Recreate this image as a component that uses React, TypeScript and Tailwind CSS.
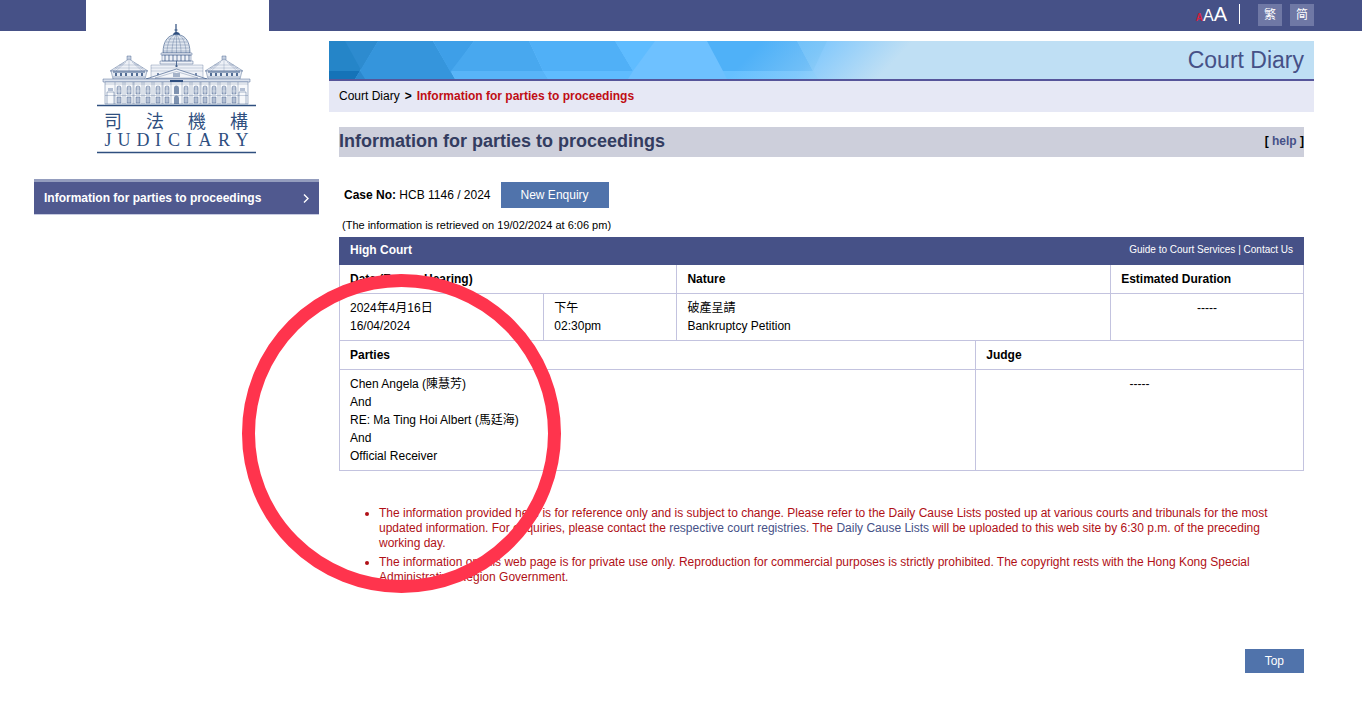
import React from 'react';

const NAVY = '#2f4f7f';

const WINDOWS = [22, 32, 41, 51, 61, 70, 89, 99, 108, 117, 127, 137];
const CHINESE_NAME = '司法機構';
const ENGLISH_NAME = 'JUDICIARY';

const SideWing = ({ x }: { x: number }) => (
  <g transform={`translate(${x} 0)`} stroke={NAVY} strokeWidth={0.4}>
    <path d="M17 38v-4h4v4" fill="#c9d3e3" />
    <path d="M19 37 0 49h38Z" fill="#eef1f7" />
    <path
      d="M16 40 6 49M19 38v11M22 40l10 9M14 41 3 49M24 41l11 8M9 43h20M5 46h28"
      strokeWidth={0.2}
    />
    <path d="M1 49h36l-2 8H3Z" fill="#e6ebf3" />
    <path d="M3 50h32" strokeWidth={0.9} />
    <path d="M6 51v3M11 51v3M16 51v3M22 51v3M27 51v3M32 51v3" strokeWidth={1.6} />
    <path d="M3 55h32" />
  </g>
);

const Logo = () => (
  <svg viewBox="0 0 160 132" className="h-[132px] w-[160px]" fill="none">
    <path d="M79 2v9M77.5 8h3" stroke={NAVY} strokeWidth={1.2} />
    <path d="M76 13c0-4 7-4 7 0Z" fill={NAVY} />
    <path
      d="M66 31C66 18 72 12.5 79.5 12.5S93 18 93 31Z"
      fill="#dfe6ef"
      stroke={NAVY}
      strokeWidth={0.6}
    />
    <path
      d="M70 31c0-9 3-16 7-18M75 31c0-9 2-15 4-18M79.5 13v18M84 31c0-9-2-15-4-18M89 31c0-9-3-16-7-18M71 17h17M69 20h21M67.5 23h24M67 26h25M66 29h27"
      stroke={NAVY}
      strokeWidth={0.3}
    />
    <path
      d="M64 31h31v2H64ZM65 33h29v6H65ZM63 39h33v3H63Z"
      fill="#eef1f7"
      stroke={NAVY}
      strokeWidth={0.4}
    />
    <path
      d="M68 33v6M72 33v6M76 33v6M80 33v6M84 33v6M88 33v6M92 33v6"
      stroke={NAVY}
      strokeWidth={0.7}
    />
    <path d="M54 43h52v14H54Z" fill="#eef1f7" stroke={NAVY} strokeWidth={0.3} />
    <path d="M54 46h52M54 49h52" stroke={NAVY} strokeWidth={0.2} />
    <path d="M60 51h2v3h-2ZM98 51h2v3h-2Z" fill={NAVY} fillOpacity={0.6} />
    <SideWing x={13} />
    <SideWing x={108} />
    <path d="M79.5 39v6M78 44h3" stroke={NAVY} strokeWidth={0.8} />
    <path d="M49 57 79.5 47 110 57Z" fill="#f4f6fa" stroke={NAVY} strokeWidth={0.6} />
    <path d="M58 56 79.5 49.5 101 56Z" stroke={NAVY} strokeWidth={0.3} />
    <path d="M76 51h7v4h-7Z" fill={NAVY} fillOpacity={0.4} />
    <path d="M6 57h147v3H6Z" fill="#dbe2ed" stroke={NAVY} strokeWidth={0.4} />
    <path d="M73 58h13v3H73Z" fill={NAVY} />
    <path d="M8 60h143v22H8Z" fill="#f6f8fb" stroke={NAVY} strokeWidth={0.4} />
    <path d="M8 73.5h143M8 62h143" stroke={NAVY} strokeWidth={0.25} />
    {WINDOWS.map((x) => (
      <g key={x}>
        <path
          d={`M${x - 2} 72v-6a2 2 0 0 1 4 0v6Z`}
          fill="#b3bfd3"
          stroke={NAVY}
          strokeWidth={0.4}
        />
        <path d={`M${x} 64v8M${x - 2} 69h4`} stroke="#f6f8fb" strokeWidth={0.4} />
        <path d={`M${x - 2} 75h4v6h-4Z`} fill="#b3bfd3" stroke={NAVY} strokeWidth={0.4} />
        <path d={`M${x - 4} 60v22M${x + 4} 60v22`} stroke={NAVY} strokeWidth={0.3} />
      </g>
    ))}
    <path d="M10 82V70h7v12M142 82V70h7v12" stroke={NAVY} strokeWidth={0.4} />
    <path d="M11 66h5v3h-5ZM143 66h5v3h-5Z" fill="#b3bfd3" />
    <path
      d="M77 72v-6a2 2 0 0 1 5 0v6ZM77 82v-6a2 2 0 0 1 5 0v6Z"
      fill={NAVY}
      fillOpacity={0.6}
    />
    <path d="M0 83.5h159M0 130.5h159" stroke={NAVY} strokeWidth={1.5} />
    <text
      x="16 58 100 142"
      y="106"
      textAnchor="middle"
      fill={NAVY}
      className="font-['Noto_Sans_CJK_TC',sans-serif] text-[18px]"
    >
      {CHINESE_NAME}
    </text>
    <text
      x="11 27 46 61 77 92 108 127 145"
      y="124"
      textAnchor="middle"
      fill={NAVY}
      className="font-['Liberation_Serif',serif] text-[18px]"
    >
      {ENGLISH_NAME}
    </text>
  </svg>
);

const BannerArt = () => (
  <svg
    viewBox="0 0 600 38"
    className="h-[38px] w-[600px] shrink-0"
    fill="none"
    aria-hidden="true"
  >
    <defs>
      <linearGradient id="fade" x1="0" x2="1" y1="0" y2="0.06">
        <stop offset="0.72" stopColor="#bfdff4" stopOpacity="0" />
        <stop offset="0.83" stopColor="#bfdff4" stopOpacity="0.3" />
        <stop offset="0.97" stopColor="#bfdff4" />
      </linearGradient>
    </defs>
    <path d="M0 0h600v38H0Z" fill="#6ec1ff" />
    <path d="M0 0h49L26 38H0Z" fill="#2585c8" />
    <path d="M16 0h33L32 29Z" fill="#2d8bcf" />
    <path d="M0 30h31l-5 8H0Z" fill="#1573b8" />
    <path d="M49 0h55l22 38H26Z" fill="#3595dc" />
    <path d="M31 30l5 8H26Z" fill="#2b87cd" />
    <path d="M104 0h41l-23 32Z" fill="#3e9fe8" />
    <path d="M145 0h55l14 30h-92Z" fill="#48a8ef" />
    <path d="M122 30h92l5 8h-93Z" fill="#58b4f8" />
    <path d="M200 0h86l18 30h-90Z" fill="#50b0f7" />
    <path d="M214 30h90l-5 8h-80Z" fill="#5fbcff" />
    <path d="M286 0h40l-22 30Z" fill="#5fbcff" />
    <path d="M378 0h90l16 30h-90Z" fill="#4fb1f8" />
    <path d="M394 30h90l5 8h-91Z" fill="#66c0ff" />
    <path d="M468 0h30l-14 30Z" fill="#63bcfa" />
    <path d="M0 0h600v38H0Z" fill="url(#fade)" />
  </svg>
);

const Header = () => (
  <header className="flex h-[31px] items-start justify-end bg-[#465187] pt-1 pr-12 text-white">
    <button type="button" aria-label="Text size" className="flex h-5 items-baseline leading-5">
      <span className="text-[10px] font-bold text-[#d8213f]">A</span>
      <span className="text-[16px]">A</span>
      <span className="text-[20px]">A</span>
    </button>
    <span className="mr-[18px] ml-3 h-5 w-px bg-white" />
    <div className="flex gap-2">
      <a href="#tc" className="h-[22px] w-6 bg-[#6f78a5] text-center text-xs leading-[22px]">
        繁
      </a>
      <a href="#sc" className="h-[22px] w-6 bg-[#6f78a5] text-center text-xs leading-[22px]">
        简
      </a>
    </div>
  </header>
);

const Sidebar = () => (
  <aside className="w-[285px] shrink-0">
    <div className="relative -mt-[31px] ml-[52px] h-[179px] w-[183px] bg-white px-[11px] pt-[22px]">
      <Logo />
    </div>
    <nav>
      <a
        href="#parties"
        className="flex items-center justify-between border-t-[3px] border-b border-t-[#949dbe] border-b-[#c6cae0] bg-[#50598f] px-[10px] py-2 text-xs font-bold text-white"
      >
        Information for parties to proceedings
        <svg viewBox="0 0 6 9" className="h-[9px] w-[6px]" fill="none" stroke="currentColor">
          <path d="m1 0.5 4 4-4 4" strokeWidth={1.4} />
        </svg>
      </a>
    </nav>
  </aside>
);

const CaseTable = () => {
  const cell = 'border border-[#c3c3df] px-[10px] py-[5px] align-top';
  return (
    <table className="w-full table-fixed border-collapse text-left leading-[18px]">
      <colgroup>
        <col className="w-[21.2%]" />
        <col className="w-[13.8%]" />
        <col className="w-[31%]" />
        <col className="w-[14%]" />
        <col className="w-[20%]" />
      </colgroup>
      <thead>
        <tr className="bg-[#465187] text-white">
          <th colSpan={5} className="border border-[#465187] px-[10px] pt-[3px] pb-[5px]">
            <div className="flex items-center justify-between">
              <span>High Court</span>
              <span className="text-[10px] font-normal">
                <a href="#guide">Guide to Court Services</a> | <a href="#contact">Contact Us</a>
              </span>
            </div>
          </th>
        </tr>
      </thead>
      <tbody>
        <tr>
          <th colSpan={2} className={cell}>Date (Future Hearing)</th>
          <th colSpan={2} className={cell}>Nature</th>
          <th className={cell}>Estimated Duration</th>
        </tr>
        <tr>
          <td className={cell}>
            2024年4月16日
            <br />
            16/04/2024
          </td>
          <td className={cell}>
            下午
            <br />
            02:30pm
          </td>
          <td colSpan={2} className={cell}>
            破產呈請
            <br />
            Bankruptcy Petition
          </td>
          <td className={`${cell} text-center`}>-----</td>
        </tr>
        <tr>
          <th colSpan={3} className={cell}>Parties</th>
          <th colSpan={2} className={cell}>Judge</th>
        </tr>
        <tr>
          <td colSpan={3} className={cell}>
            Chen Angela (陳慧芳)
            <br />
            And
            <br />
            RE: Ma Ting Hoi Albert (馬廷海)
            <br />
            And
            <br />
            Official Receiver
          </td>
          <td colSpan={2} className={`${cell} text-center`}>-----</td>
        </tr>
      </tbody>
    </table>
  );
};

const Notes = () => (
  <ul className="mt-[35px] list-disc space-y-1 pr-[30px] pl-10 leading-[15px] text-[#b01016]">
    <li>
      The information provided here is for reference only and is subject to change. Please refer to
      the Daily Cause Lists posted up at various courts and tribunals for the most updated
      information. For enquiries, please contact the{' '}
      <a href="#registries" className="text-[#465187]">respective court registries</a>. The{' '}
      <a href="#lists" className="text-[#465187]">Daily Cause Lists</a> will be uploaded to this web
      site by 6:30 p.m. of the preceding working day.
    </li>
    <li>
      The information on this web page is for private use only. Reproduction for commercial purposes
      is strictly prohibited. The copyright rests with the Hong Kong Special Administrative Region
      Government.
    </li>
  </ul>
);

const App = () => {
  return (
    <div className="relative min-h-screen bg-white font-['Liberation_Sans','Noto_Sans_CJK_TC',sans-serif] text-xs text-black">
      <Header />
      <div className="flex gap-[10px] pr-12 pl-[34px]">
        <Sidebar />
        <main className="min-w-0 flex-1 pt-[10px]">
          <div className="flex h-10 items-center overflow-hidden border-b-2 border-[#56559a] bg-[#bfdff4]">
            <BannerArt />
            <div className="flex-1 pr-[10px] text-right text-[23px] leading-[38px] whitespace-nowrap text-[#465187]">
              Court Diary
            </div>
          </div>
          <div className="bg-[#e6e8f5] px-[10px] pt-[7px] pb-2">
            <a href="#diary">Court Diary</a>
            <span className="px-[5px] font-bold">&gt;</span>
            <span className="font-bold text-[#c00d14]">Information for parties to proceedings</span>
          </div>

          <div className="px-[10px] pt-[15px]">
            <div className="flex items-center justify-between bg-[#cdcfdb] pb-[2px]">
              <h1 className="text-lg font-bold text-[#333c60]">
                Information for parties to proceedings
              </h1>
              <span className="font-bold">
                [ <a href="#help" className="text-[#465187]">help</a> ]
              </span>
            </div>

            <div className="mt-[25px] flex items-center gap-[10px] pl-[5px]">
              <p>
                <b>Case No:</b> HCB 1146 / 2024
              </p>
              <button type="button" className="h-[26px] bg-[#5073ab] px-5 text-white">
                New Enquiry
              </button>
            </div>
            <p className="mt-[9px] mb-[4px] pl-[3px] text-[11px] leading-4">
              (The information is retrieved on 19/02/2024 at 6:06 pm)
            </p>

            <CaseTable />
            <Notes />

            <div className="mt-16 flex justify-end pb-[30px]">
              <a href="#top" className="bg-[#5073ab] px-5 py-1 text-white">
                Top
              </a>
            </div>
          </div>
        </main>
      </div>
      <div className="pointer-events-none absolute top-[274px] left-[242px] h-[319px] w-[319px] rounded-full border-[13px] border-[#ff344d]" />
    </div>
  );
};

export default App;
